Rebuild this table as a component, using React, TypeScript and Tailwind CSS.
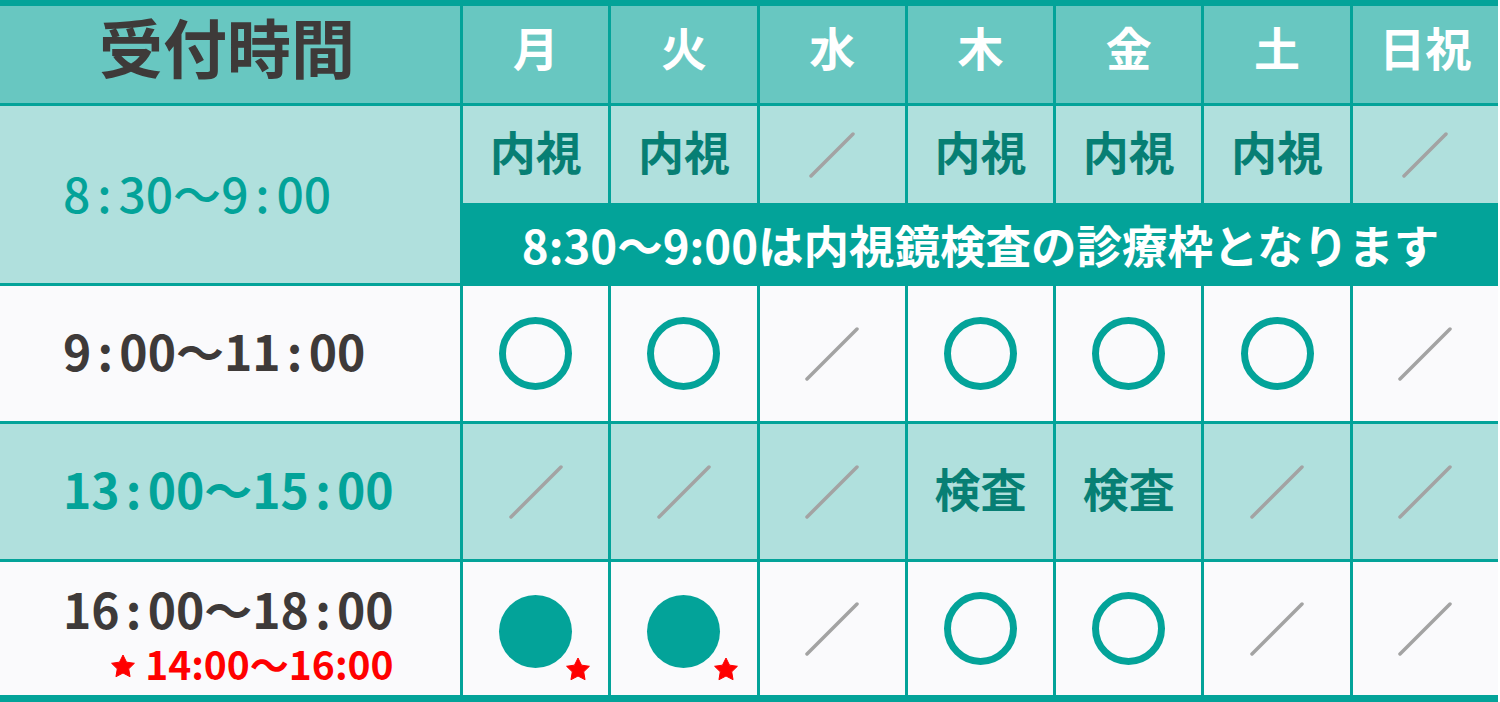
import type { ReactNode } from "react";

const LIGHT = "bg-[#b0e0dd]";
const WHITE = "bg-[#fafafc]";

function Colon() {
    return <span className="inline-block w-[28px] text-center">:</span>;
}

function Time({ from, to }: { from: [string, string]; to: [string, string] }) {
    return (
        <span className="whitespace-nowrap">
            {from[0]}
            <Colon />
            {from[1]}〜{to[0]}
            <Colon />
            {to[1]}
        </span>
    );
}

function Slash({ size = 54 }: { size?: number }) {
    return (
        <svg width={size} height={size} viewBox={`0 0 ${size} ${size}`}>
            <line x1="2" y1={size - 2} x2={size - 2} y2="2" stroke="#a3a3a3" strokeWidth="3.5" strokeLinecap="round" />
        </svg>
    );
}

function Ring() {
    return <div className="h-[73px] w-[73px] rounded-full border-[7px] border-[#03a399]" />;
}

function Star({ className = "" }: { className?: string }) {
    // 5-point star, fat arms
    const pts: string[] = [];
    for (let i = 0; i < 10; i++) {
        const r = i % 2 === 0 ? 12 : 6;
        const a = -Math.PI / 2 + (i * Math.PI) / 5;
        pts.push(`${12 + r * Math.cos(a)},${13 + r * Math.sin(a)}`);
    }
    return (
        <svg width="24" height="24" viewBox="0 0 24 24" className={className}>
            <polygon points={pts.join(" ")} fill="#ff0000" strokeLinejoin="round" stroke="#ff0000" strokeWidth="1" />
        </svg>
    );
}

function Dot() {
    return (
        <div className="relative mt-[6px] h-[73px] w-[73px] rounded-full bg-[#03a399]">
            <Star className="absolute left-[67px] top-[62px]" />
        </div>
    );
}

function Cell({ bg, children }: { bg: string; children?: ReactNode }) {
    return <div className={`flex items-center justify-center ${bg}`}>{children}</div>;
}

function Label({ bg, children, span = false }: { bg: string; children: ReactNode; span?: boolean }) {
    return <div className={`flex items-center pl-[63px] ${span ? "row-span-2" : ""} ${bg}`}>{children}</div>;
}

function Word({ children }: { children: ReactNode }) {
    return <span className="pb-[9px] text-[46px] font-bold leading-none text-[#077f74]">{children}</span>;
}

export default function App() {
    const days = ["月", "火", "水", "木", "金", "土", "日祝"];

    return (
        <div className="h-[702px] w-[1500px] bg-white font-['Noto_Sans_CJK_JP','Noto_Sans',sans-serif]">
            <div className="grid w-[1498px] grid-cols-[460px_repeat(7,1fr)] grid-rows-[97px_97px_77px_135px_135px_133px] gap-[3px] bg-[#03a399] pb-[7px] pt-[6px]">
                {/* header */}
                <Cell bg="bg-[#68c7c1]">
                    <span className="pb-[20px] pr-[6px] text-[64px] font-bold leading-none text-[#3e3a39]">受付時間</span>
                </Cell>
                {days.map((d) => (
                    <Cell key={d} bg="bg-[#68c7c1]">
                        <span className="pb-[18px] text-[46px] font-bold leading-none text-white">{d}</span>
                    </Cell>
                ))}

                {/* 8:30 - 9:00 */}
                <Label bg={LIGHT} span>
                    <span className="pb-[6px] text-[48px] font-medium leading-none text-[#03a399]">
                        <Time from={["8", "30"]} to={["9", "00"]} />
                    </span>
                </Label>
                <Cell bg={LIGHT}><Word>内視</Word></Cell>
                <Cell bg={LIGHT}><Word>内視</Word></Cell>
                <Cell bg={LIGHT}><Slash size={46} /></Cell>
                <Cell bg={LIGHT}><Word>内視</Word></Cell>
                <Cell bg={LIGHT}><Word>内視</Word></Cell>
                <Cell bg={LIGHT}><Word>内視</Word></Cell>
                <Cell bg={LIGHT}><Slash size={46} /></Cell>
                <div className="col-span-7 -mt-[3px] flex items-center justify-center bg-[#03a399] pt-[3px]">
                    <span className="text-[45.5px] font-bold leading-none text-white">8:30〜9:00は内視鏡検査の診療枠となります</span>
                </div>

                {/* 9:00 - 11:00 */}
                <Label bg={WHITE}>
                    <span className="pb-[8px] text-[48px] font-semibold leading-none text-[#3e3a39]">
                        <Time from={["9", "00"]} to={["11", "00"]} />
                    </span>
                </Label>
                <Cell bg={WHITE}><Ring /></Cell>
                <Cell bg={WHITE}><Ring /></Cell>
                <Cell bg={WHITE}><Slash /></Cell>
                <Cell bg={WHITE}><Ring /></Cell>
                <Cell bg={WHITE}><Ring /></Cell>
                <Cell bg={WHITE}><Ring /></Cell>
                <Cell bg={WHITE}><Slash /></Cell>

                {/* 13:00 - 15:00 */}
                <Label bg={LIGHT}>
                    <span className="pb-[7px] text-[48px] font-semibold leading-none text-[#03a399]">
                        <Time from={["13", "00"]} to={["15", "00"]} />
                    </span>
                </Label>
                <Cell bg={LIGHT}><Slash /></Cell>
                <Cell bg={LIGHT}><Slash /></Cell>
                <Cell bg={LIGHT}><Slash /></Cell>
                <Cell bg={LIGHT}><Word>検査</Word></Cell>
                <Cell bg={LIGHT}><Word>検査</Word></Cell>
                <Cell bg={LIGHT}><Slash /></Cell>
                <Cell bg={LIGHT}><Slash /></Cell>

                {/* 16:00 - 18:00 */}
                <Label bg={WHITE}>
                    <div className="flex flex-col items-end gap-[12px] pt-[10px]">
                        <span className="text-[48px] font-semibold leading-none text-[#3e3a39]">
                            <Time from={["16", "00"]} to={["18", "00"]} />
                        </span>
                        <span className="flex items-center gap-[10px] text-[39px] font-bold leading-none text-[#ff0000]">
                            <Star className="mt-[4px]" />
                            14:00〜16:00
                        </span>
                    </div>
                </Label>
                <Cell bg={WHITE}><Dot /></Cell>
                <Cell bg={WHITE}><Dot /></Cell>
                <Cell bg={WHITE}><Slash /></Cell>
                <Cell bg={WHITE}><Ring /></Cell>
                <Cell bg={WHITE}><Ring /></Cell>
                <Cell bg={WHITE}><Slash /></Cell>
                <Cell bg={WHITE}><Slash /></Cell>
            </div>
        </div>
    );
}
